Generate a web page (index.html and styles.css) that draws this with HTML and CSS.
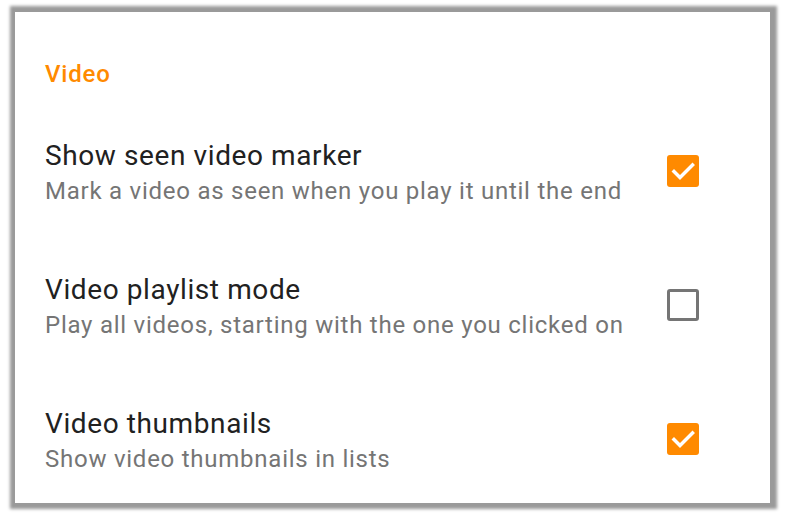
FILE: index.html
```html
<!DOCTYPE html>
<html lang="en">
<head>
    <meta charset="UTF-8">
    <meta name="viewport" content="width=device-width, initial-scale=1.0">
    <title>Video settings</title>
    <link rel="stylesheet" href="styles.css">
</head>
<body>
    <div class="card">
        <div class="category">Video</div>

        <div class="pref">
            <div class="pref-text">
                <div class="pref-title">Show seen video marker</div>
                <div class="pref-summary">Mark a video as seen when you play it until the end</div>
            </div>
            <div class="checkbox checked">
                <svg viewBox="0 0 32 32" width="32" height="32"><polyline points="7,16.5 13,22.5 25.5,10" /></svg>
            </div>
        </div>

        <div class="pref">
            <div class="pref-text">
                <div class="pref-title">Video playlist mode</div>
                <div class="pref-summary">Play all videos, starting with the one you clicked on</div>
            </div>
            <div class="checkbox"></div>
        </div>

        <div class="pref">
            <div class="pref-text">
                <div class="pref-title">Video thumbnails</div>
                <div class="pref-summary">Show video thumbnails in lists</div>
            </div>
            <div class="checkbox checked">
                <svg viewBox="0 0 32 32" width="32" height="32"><polyline points="7,16.5 13,22.5 25.5,10" /></svg>
            </div>
        </div>
    </div>
</body>
</html>
```

FILE: styles.css
```css
html, body {
    margin: 0;
    background-color: #fff;
}
body {
    padding: 12px 16px 14px 15px;
    font-family: Roboto, "Noto Sans", Arial, sans-serif;
    overflow: hidden;
}
.card {
    height: 491px;
    box-sizing: border-box;
    background-color: #fff;
    padding: 47px 0 0 30px;
    box-shadow: 1px 0 3px 6px #9a9a9a;
    overflow: hidden;
}
.category {
    font-size: 24px;
    line-height: 30px;
    font-weight: 500;
    letter-spacing: 0.8px;
    color: #ff8a00;
    padding-bottom: 18px;
}
.pref {
    display: flex;
    align-items: center;
    padding: 32px 0;
}
.pref-text {
    flex: 1;
}
.pref-title {
    font-size: 28px;
    line-height: 34px;
    letter-spacing: 0.6px;
    color: #212121;
}
.pref-summary {
    font-size: 24px;
    line-height: 36px;
    letter-spacing: 0.75px;
    color: #757575;
}
.checkbox {
    width: 32px;
    height: 32px;
    box-sizing: border-box;
    margin: 0 71px 7px 20px;
    border: 3px solid #757575;
    border-radius: 3px;
}
.checkbox.checked {
    border: none;
    background-color: #ff8a00;
}
.checkbox svg {
    display: block;
}
.checkbox polyline {
    fill: none;
    stroke: #fff;
    stroke-width: 3.5;
    stroke-linecap: square;
}
```
